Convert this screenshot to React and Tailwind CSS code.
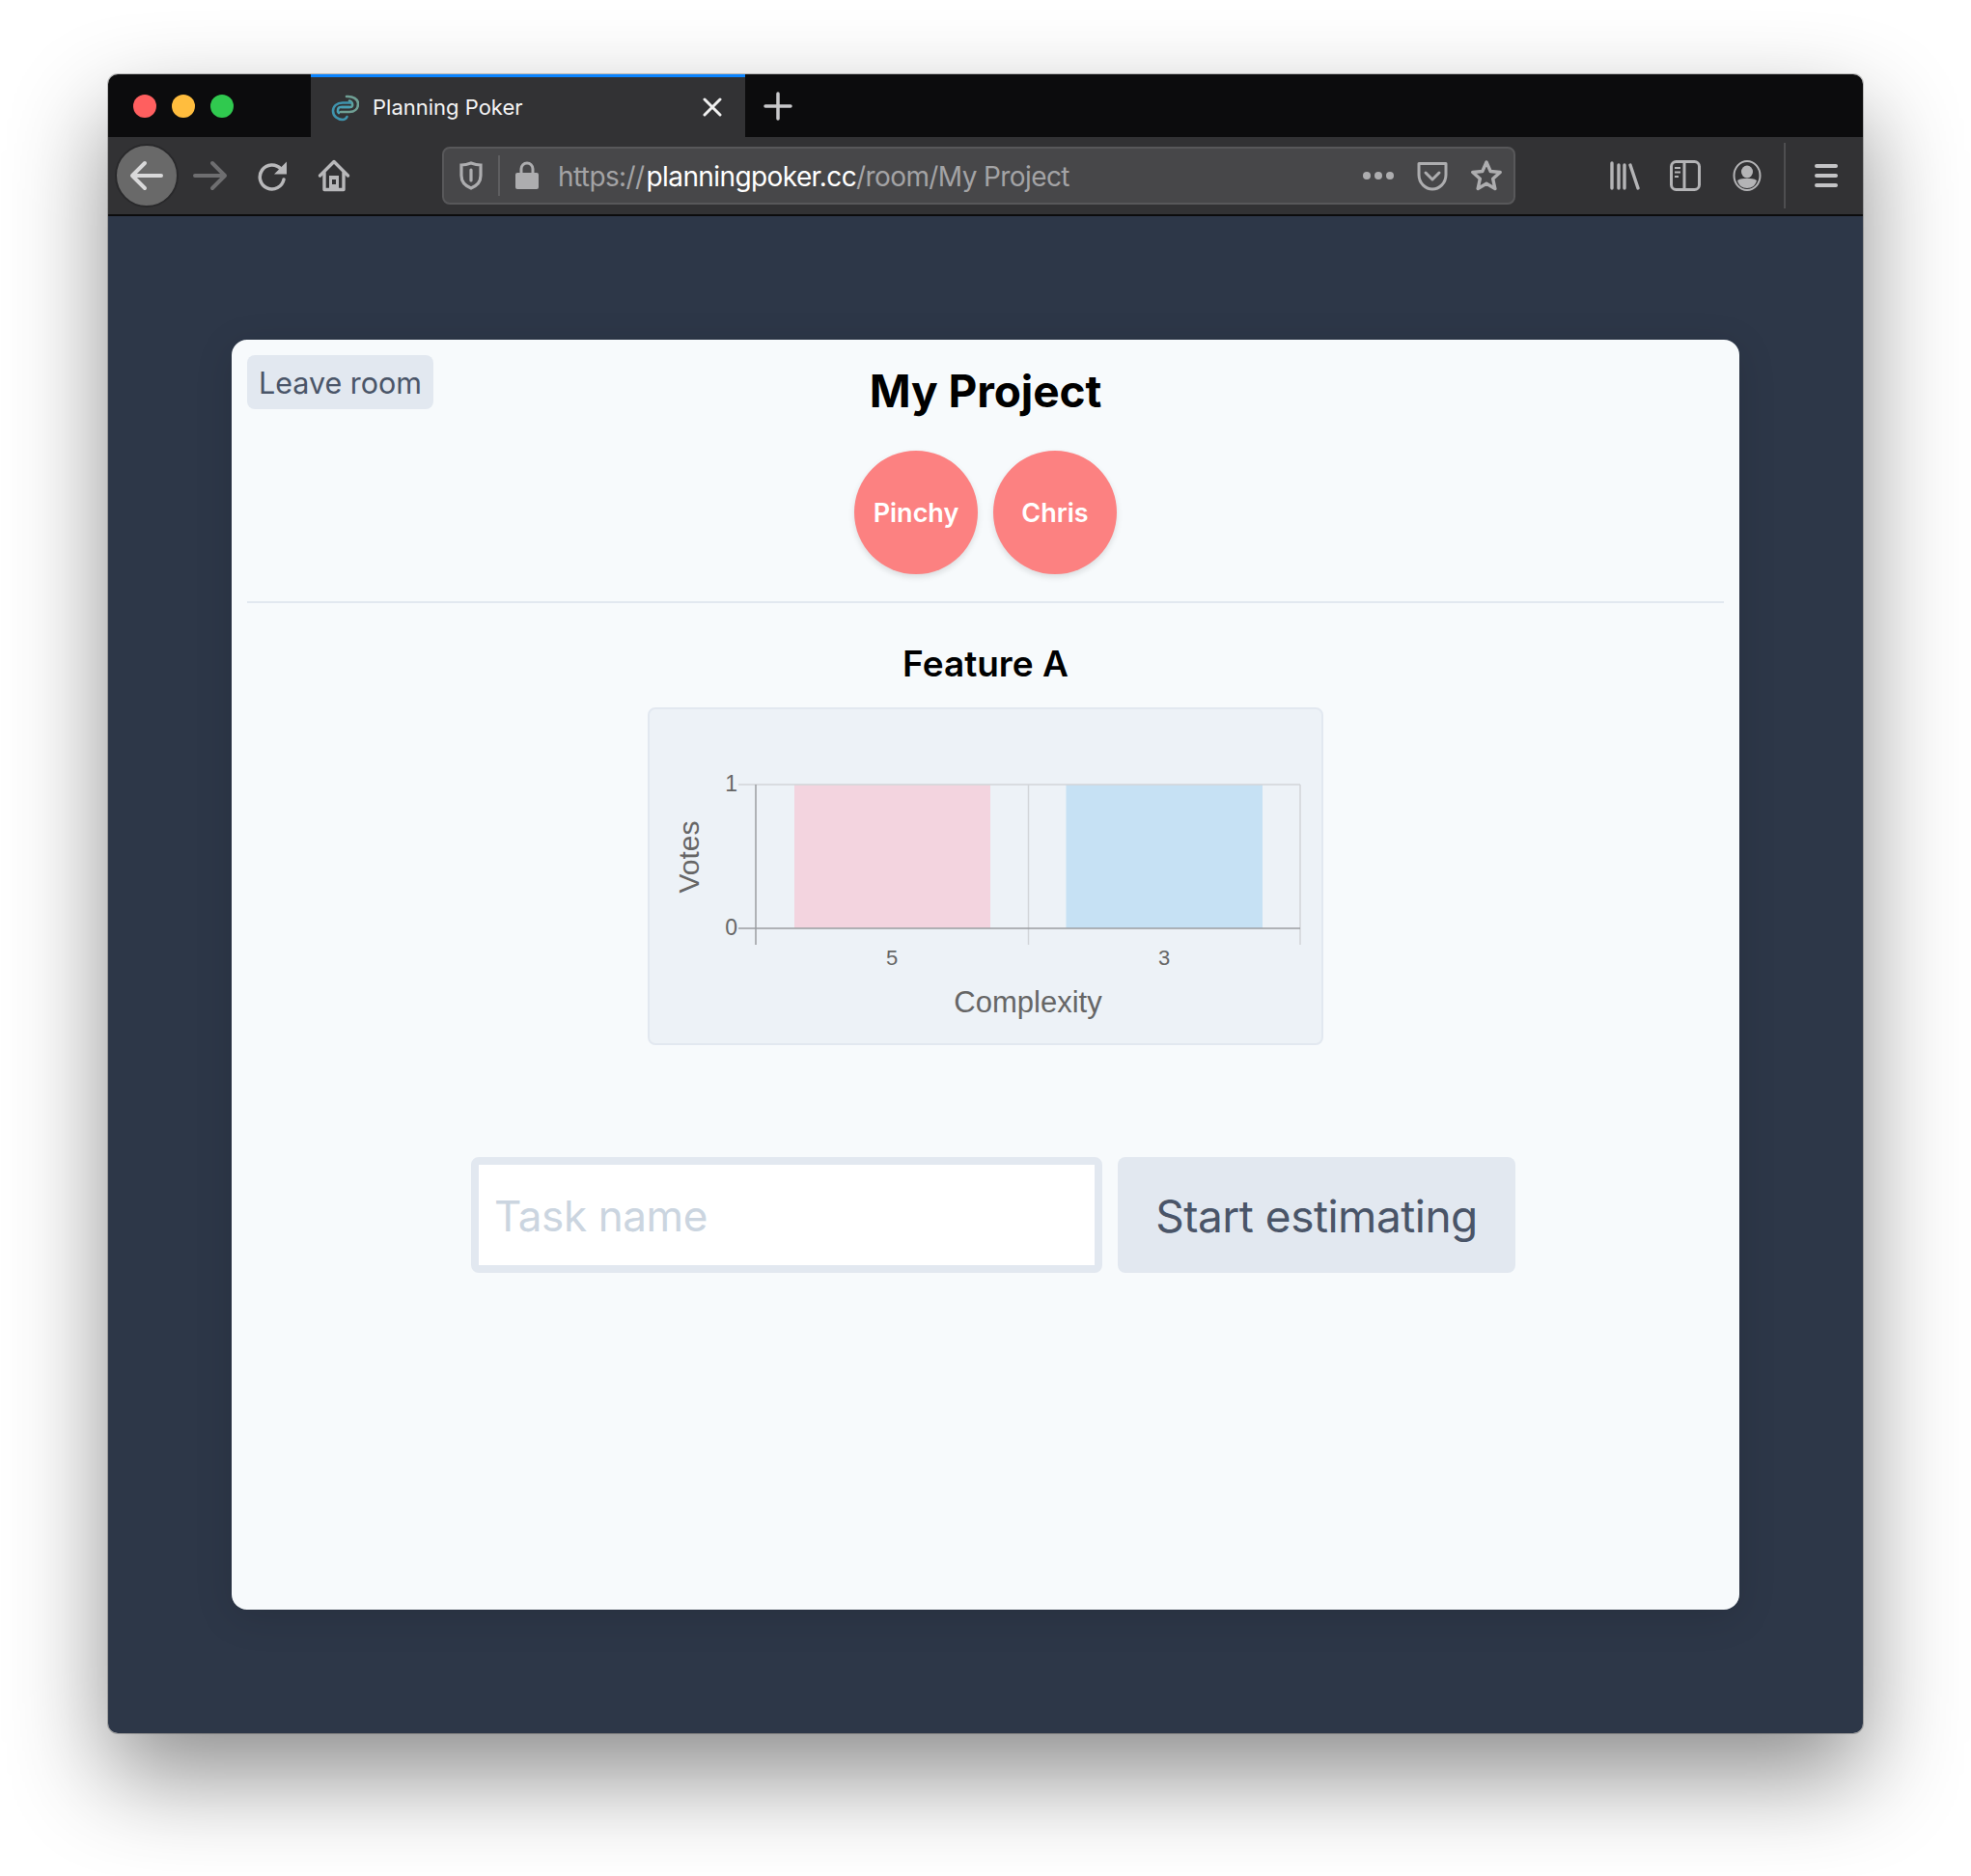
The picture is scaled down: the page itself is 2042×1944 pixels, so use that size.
function Favicon() {
  return (
    <svg width="30" height="30" viewBox="0 0 30 30" fill="none" strokeWidth="2.600" strokeLinecap="round">
      <path d="M17 4C24 3.500 29 7 29 11.500C29 17 25 20 20 20H11" stroke="#6f9f94" />
      <path d="M12 15H21C24 15 24 10 20 8.500" stroke="#5fa39e" />
      <path d="M21 10.500H13C7 10.500 3 14 3 19C3 24.500 8 28 13 28C15 28 16.500 27 17.500 25" stroke="#3f93ad" />
      <path d="M20 15H11C8 15 7 19 9 21" stroke="#48a0b6" />
    </svg>
  );
}

function BackIcon() {
  return (
    <svg width="36" height="32" viewBox="0 0 36 32" fill="none" stroke="#d9d9da" strokeWidth="4" strokeLinecap="round" strokeLinejoin="round">
      <path d="M33 16H4M16 3 3 16l13 13" />
    </svg>
  );
}

function ForwardIcon() {
  return (
    <svg width="36" height="32" viewBox="0 0 36 32" fill="none" stroke="#6e6e70" strokeWidth="4" strokeLinecap="round" strokeLinejoin="round">
      <path d="M2 16h30M20 3l13 13-13 13" />
    </svg>
  );
}

function ReloadIcon() {
  return (
    <svg width="32" height="32" viewBox="0 0 32 32" fill="none">
      <path d="M24 9A12.500 12.500 0 1 0 27 20" stroke="#b8b8ba" strokeWidth="3.500" strokeLinecap="round" />
      <path d="M30 1.500V14.500H17z" fill="#b8b8ba" />
    </svg>
  );
}

function HomeIcon() {
  return (
    <svg width="34" height="34" viewBox="0 0 34 34" fill="none" stroke="#b8b8ba" strokeWidth="3.400" strokeLinejoin="round" strokeLinecap="round">
      <path d="M2.500 17 17 2.500 31.500 17" />
      <path d="M7 14V31.500H27V14" />
      <path fillRule="evenodd" d="M12 17H22V32H12ZM15 21V26H19V21Z" fill="#b8b8ba" stroke="none" />
    </svg>
  );
}

function ShieldIcon() {
  return (
    <svg width="24" height="30" viewBox="0 0 24 30" fill="none" stroke="#adadaf" strokeWidth="3.200" strokeLinecap="round">
      <path d="M12 2C8 3.500 5 4 2 4V15C2 22 7 26 12 28C17 26 22 22 22 15V4C19 4 16 3.500 12 2Z" />
      <path d="M12 9V20" />
    </svg>
  );
}

function LockIcon() {
  return (
    <svg width="24" height="30" viewBox="0 0 24 30" fill="none">
      <path d="M6 14V8a6 6 0 0 1 12 0V14" stroke="#adadaf" strokeWidth="3" />
      <rect x="0" y="12" width="24" height="17" rx="2" fill="#adadaf" />
    </svg>
  );
}

function PocketIcon() {
  return (
    <svg width="32" height="32" viewBox="0 0 32 32" fill="none" stroke="#adadaf" strokeWidth="3" strokeLinecap="round" strokeLinejoin="round">
      <path d="M2 3.500H30V15C30 24 23 30 16 30C9 30 2 24 2 15Z" />
      <path d="M9 13l7 7 7-7" />
    </svg>
  );
}

function StarIcon() {
  return (
    <svg width="34" height="34" viewBox="0 0 34 34" fill="none" stroke="#adadaf" strokeWidth="3.400" strokeLinejoin="round">
      <path d="M17 3l4.200 9.500 10 1-7.500 6.800 2.200 10.200-8.900-5.300-8.900 5.300 2.200-10.200-7.500-6.800 10-1z" />
    </svg>
  );
}

function LibraryIcon() {
  return (
    <svg width="32" height="30" viewBox="0 0 32 30" fill="none" stroke="#b4b4b6" strokeWidth="3.400" strokeLinecap="round">
      <path d="M3 2V28M10 4V28M16 4V28M22 4L30 28" />
    </svg>
  );
}

function SidebarIcon() {
  return (
    <svg width="32" height="32" viewBox="0 0 32 32" fill="none" stroke="#b4b4b6">
      <rect x="1.500" y="1.500" width="29" height="29" rx="5" strokeWidth="3" />
      <path d="M15 2V30" strokeWidth="3" />
      <path d="M5 8h6M5 12.500h6M5 17h4" strokeWidth="2" />
    </svg>
  );
}

function AccountIcon() {
  return (
    <svg width="30" height="32" viewBox="0 0 30 32" fill="none">
      <ellipse cx="15" cy="16" rx="13.500" ry="15" stroke="#b4b4b6" strokeWidth="2" />
      <ellipse cx="15" cy="12" rx="6" ry="6.500" fill="#b4b4b6" />
      <path d="M5 21C8 19 11 19 15 19C19 19 22 19 25 21C24 26 20 29 15 29C10 29 6 26 5 21Z" fill="#b4b4b6" />
    </svg>
  );
}

function MenuIcon() {
  return (
    <svg width="24" height="24" viewBox="0 0 24 24" fill="none" stroke="#c4c4c6" strokeWidth="4" strokeLinecap="round">
      <path d="M2 2H22M2 12H22M2 22H22" />
    </svg>
  );
}

function VotesChart() {
  return (
    <svg width="696" height="346" viewBox="-1 0 696 346" fontFamily="'Liberation Sans', Arial, sans-serif" fill="#666666">
      <rect x="149" y="78" width="203" height="149" fill="#f3d4df" />
      <rect x="430.500" y="78" width="203.500" height="149" fill="#c6e1f4" />
      <path d="M91 78H673M391.500 78V244M673 78V244" stroke="#d2d5d9" strokeWidth="1.500" fill="none" />
      <path d="M109 78V244M91 227H673" stroke="#9a9da1" strokeWidth="1.500" fill="none" />
      <text x="90" y="85" textAnchor="end" fontSize="23">1</text>
      <text x="90" y="234" textAnchor="end" fontSize="23">0</text>
      <text x="250" y="265" textAnchor="middle" fontSize="22">5</text>
      <text x="532" y="265" textAnchor="middle" fontSize="22">3</text>
      <text x="391" y="314" textAnchor="middle" fontSize="31">Complexity</text>
      <text x="0" y="0" textAnchor="middle" fontSize="30" transform="translate(50 153) rotate(-90)">Votes</text>
    </svg>
  );
}

function Avatar({ name }) {
  return (
    <div className="flex h-[128px] w-[128px] items-center justify-center rounded-full bg-[#fc8181] pt-[2px] text-[27px] font-semibold text-white shadow-[0_3px_6px_rgba(0,0,0,0.12)]">
      {name}
    </div>
  );
}

export default function App() {
  return (
    <div className="h-[1944px] w-[2042px] bg-white pl-[112px] pt-[77px] font-['Inter',sans-serif]">
      <div className="flex h-[1719px] w-[1818px] flex-col overflow-hidden rounded-[10px] shadow-[0_0_0_1px_rgba(0,0,0,0.22),0_44px_100px_rgba(0,0,0,0.45)]">
        {/* tab strip */}
        <div className="flex h-[65px] bg-[#0c0c0d]">
          <div className="flex w-[210px] items-center gap-4 pl-[26px]">
            <span className="h-6 w-6 rounded-full bg-[#ff5f5f]" />
            <span className="h-6 w-6 rounded-full bg-[#ffbd3e]" />
            <span className="h-6 w-6 rounded-full bg-[#30c94f]" />
          </div>
          <div className="flex w-[450px] items-center border-t-[3px] border-[#0a84ff] bg-[#323234] pl-[20px] text-white">
            <Favicon />
            <span className="ml-[14px] text-[22px] text-[#f4f4f4]">Planning Poker</span>
            <svg className="ml-auto mr-[24px]" width="20" height="20" viewBox="0 0 20 20" stroke="#f0f0f0" strokeWidth="3" strokeLinecap="round">
              <path d="M2 2 18 18M18 2 2 18" />
            </svg>
          </div>
          <div className="flex w-[68px] items-center justify-center">
            <svg width="30" height="30" viewBox="0 0 30 30" stroke="#c8c8ca" strokeWidth="3.500" strokeLinecap="round">
              <path d="M15 2V28M2 15H28" />
            </svg>
          </div>
        </div>

        {/* toolbar */}
        <div className="flex h-[82px] items-center border-b-2 border-[#0c0c0d] bg-[#323234] pl-[7px]">
          <div className="flex h-[66px] w-[66px] items-center justify-center rounded-full border-2 border-[#29292b] bg-[#696969]">
            <BackIcon />
          </div>
          <div className="flex w-[66px] justify-center"><ForwardIcon /></div>
          <div className="flex w-[64px] justify-center"><ReloadIcon /></div>
          <div className="flex w-[62px] justify-center"><HomeIcon /></div>
          <div className="ml-[81px] flex h-[60px] w-[1112px] items-center rounded-lg border-2 border-[#58585a] bg-[#474749]">
            <div className="flex w-[56px] justify-center"><ShieldIcon /></div>
            <div className="h-[42px] w-[2px] bg-[#5e5e60]" />
            <div className="flex w-[56px] justify-center"><LockIcon /></div>
            <div className="ml-[4px] pt-[2px] text-[28px] tracking-[-0.6px] text-[#a3a3a5]">
              https://<span className="ml-[2px] text-white">planningpoker.cc</span>/room/My Project
            </div>
            <div className="ml-auto flex items-center">
              <svg width="32" height="8" viewBox="0 0 32 8" fill="#adadaf">
                <circle cx="4" cy="4" r="4" />
                <circle cx="16" cy="4" r="4" />
                <circle cx="28" cy="4" r="4" />
              </svg>
              <div className="ml-[24px]"><PocketIcon /></div>
              <div className="ml-[23px] mr-[11px]"><StarIcon /></div>
            </div>
          </div>
          <div className="ml-[97px] flex items-center">
            <LibraryIcon />
            <div className="ml-[31px]"><SidebarIcon /></div>
            <div className="ml-[33px]"><AccountIcon /></div>
          </div>
          <div className="ml-[23px] h-[68px] w-[2px] bg-[#4e4e50]" />
          <div className="ml-[30px]"><MenuIcon /></div>
        </div>

        {/* page */}
        <div className="flex-1 bg-[#2d3748] p-[128px]">
          <div className="flex h-full flex-col rounded-2xl bg-[#f7fafc] p-4 shadow-[0_8px_40px_rgba(0,0,0,0.12)]">
            <div className="grid grid-cols-[1fr_auto_1fr]">
              <button className="h-[56px] w-[193px] rounded-lg bg-[#e2e8f0] pt-[2px] text-[30.500px] text-[#4a5568]">Leave room</button>
              <h1 className="mt-[5px] text-center text-[46px] leading-[64px] font-bold tracking-[-0.1px] text-black">My Project</h1>
            </div>
            <div className="mt-[30px] flex justify-center gap-4">
              <Avatar name="Pinchy" />
              <Avatar name="Chris" />
            </div>
            <div className="mt-[28px] h-[2px] bg-[#e2e8f0]" />
            <h2 className="mt-[38px] text-center text-[37px] leading-[50px] font-semibold text-black">Feature A</h2>
            <div className="mx-auto mt-[20px] h-[350px] w-[700px] rounded-lg border-2 border-[#e2e8f0] bg-[#edf2f7]">
              <VotesChart />
            </div>
            <div className="mt-[116px] flex justify-center gap-4 pl-4">
              <input
                className="h-[120px] w-[654px] rounded-lg border-[8px] border-[#e2e8f0] bg-white px-4 pt-[2px] text-[44px] tracking-[-0.4px] text-[#4a5568] outline-none placeholder:text-[#cbd5e0]"
                placeholder="Task name"
              />
              <button className="h-[120px] w-[412px] rounded-lg bg-[#e2e8f0] pt-[2px] text-[46px] tracking-[-0.5px] text-[#4a5568]">Start estimating</button>
            </div>
          </div>
        </div>
      </div>
    </div>
  );
}
